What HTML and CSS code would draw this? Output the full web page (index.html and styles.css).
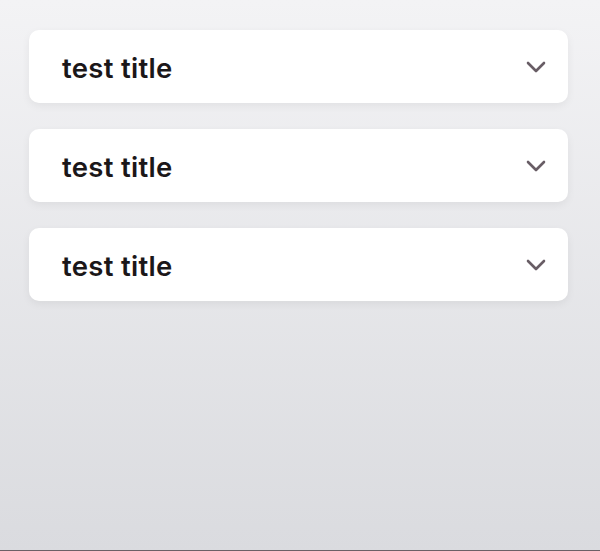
FILE: index.html
```html
<!DOCTYPE html>
<html>
<head>
<meta charset="utf-8">
<link rel="stylesheet" href="styles.css">
</head>
<body>
<div class="page">
  <div class="list">
    <div class="item">
      <span class="title">test title</span>
      <svg class="chev" width="20" height="12" viewBox="0 0 20 12"><path d="M2 2 L10 10 L18 2" fill="none" stroke="#685d65" stroke-width="2.6" stroke-linecap="round" stroke-linejoin="round"/></svg>
    </div>
    <div class="item">
      <span class="title">test title</span>
      <svg class="chev" width="20" height="12" viewBox="0 0 20 12"><path d="M2 2 L10 10 L18 2" fill="none" stroke="#685d65" stroke-width="2.6" stroke-linecap="round" stroke-linejoin="round"/></svg>
    </div>
    <div class="item">
      <span class="title">test title</span>
      <svg class="chev" width="20" height="12" viewBox="0 0 20 12"><path d="M2 2 L10 10 L18 2" fill="none" stroke="#685d65" stroke-width="2.6" stroke-linecap="round" stroke-linejoin="round"/></svg>
    </div>
  </div>
</div>
</body>
</html>
```
FILE: styles.css
```css
html, body {
  margin: 0;
  padding: 0;
}
body {
  font-family: Inter, "Noto Sans", sans-serif;
}
.page {
  box-sizing: border-box;
  height: 551px;
  background: linear-gradient(to bottom, #f3f3f5 0%, #dadbdf 100%);
  border-bottom: 1px solid #6b5f66;
  padding: 30px 32px 0 29px;
}
.list {
  display: flex;
  flex-direction: column;
  gap: 26px;
}
.item {
  height: 73px;
  box-sizing: border-box;
  background: #fff;
  border-radius: 10px;
  box-shadow: 0 3px 8px rgba(0, 0, 0, 0.06);
  display: flex;
  align-items: center;
  justify-content: space-between;
  padding: 0 22px 0 33px;
}
.title {
  font-size: 27.5px;
  font-weight: 600;
  color: #1b1719;
  letter-spacing: 0.3px;
  padding-top: 2px;
}
.chev {
  display: block;
}
```
